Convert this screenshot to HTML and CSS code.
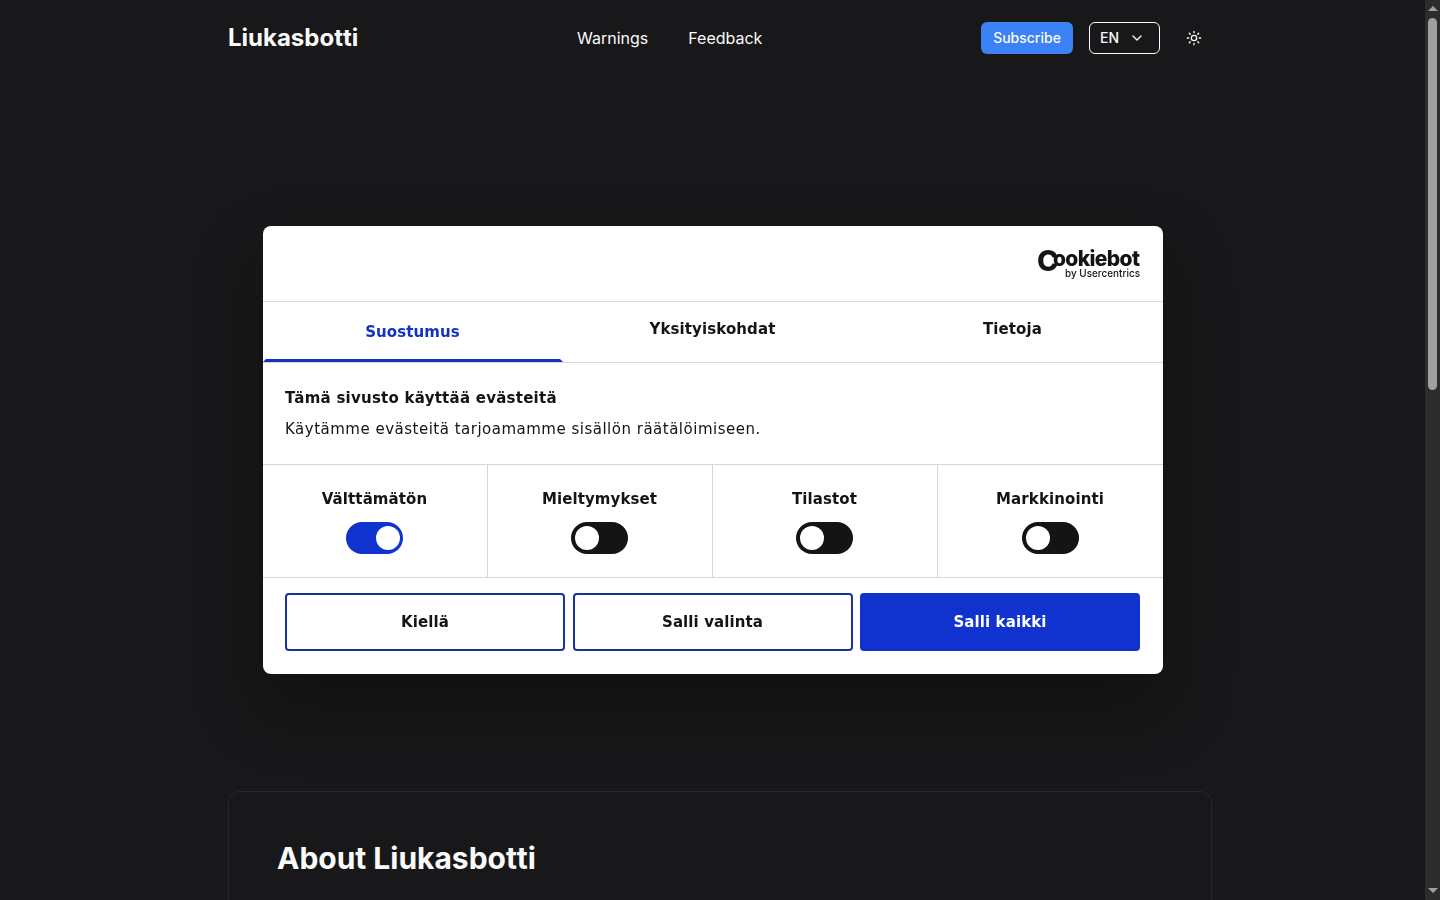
FILE: index.html
```
<!DOCTYPE html>
<html lang="en">
<head>
	<meta charset="UTF-8">
	<meta name="viewport" content="width=device-width, initial-scale=1.0">
	<title>Liukasbotti</title>
	<link rel="stylesheet" href="styles.css">
</head>
<body>
	<div class="page">
		<header class="header">
			<a class="brand" href="#">Liukasbotti</a>
			<nav class="nav">
				<a href="#">Warnings</a>
				<a href="#">Feedback</a>
			</nav>
			<div class="actions">
				<button class="subscribe">Subscribe</button>
				<button class="lang">EN
					<svg width="16" height="16" viewBox="0 0 24 24" fill="none" stroke="currentColor" stroke-width="2" stroke-linecap="round" stroke-linejoin="round"><path d="m6 9 6 6 6-6"/></svg>
				</button>
				<button class="theme" aria-label="Theme">
					<svg width="16" height="16" viewBox="0 0 24 24" fill="none" stroke="currentColor" stroke-width="2" stroke-linecap="round" stroke-linejoin="round"><circle cx="12" cy="12" r="4"/><path d="M12 2v2M12 20v2M4.93 4.93l1.41 1.41M17.66 17.66l1.41 1.41M2 12h2M20 12h2M6.34 17.66l-1.41 1.41M19.07 4.93l-1.41 1.41"/></svg>
				</button>
			</div>
		</header>
		<section class="about">
			<h2>About Liukasbotti</h2>
		</section>
	</div>

	<div class="dialog" role="dialog" lang="fi">
		<div class="dialog-header">
			<svg class="logo" width="104" height="34" viewBox="0 0 104 34">
				<text><tspan class="logo-c" x="0" y="23.6">C</tspan><tspan class="logo-name" x="16" y="18.7" textLength="87" lengthAdjust="spacing">ookiebot</tspan></text>
				<text class="logo-by" x="28" y="29.7" textLength="75" lengthAdjust="spacingAndGlyphs">by Usercentrics</text>
			</svg>
		</div>
		<ul class="tabs">
			<li class="tab active">Suostumus</li>
			<li class="tab">Yksityiskohdat</li>
			<li class="tab">Tietoja</li>
		</ul>
		<div class="dialog-text">
			<h3>Tämä sivusto käyttää evästeitä</h3>
			<p>Käytämme evästeitä tarjoamamme sisällön räätälöimiseen.</p>
		</div>
		<div class="types">
			<div class="type"><span>Välttämätön</span><i class="switch on"></i></div>
			<div class="type"><span>Mieltymykset</span><i class="switch"></i></div>
			<div class="type"><span>Tilastot</span><i class="switch"></i></div>
			<div class="type"><span>Markkinointi</span><i class="switch"></i></div>
		</div>
		<div class="buttons">
			<button>Kiellä</button>
			<button>Salli valinta</button>
			<button class="primary">Salli kaikki</button>
		</div>
	</div>

	<div class="scrollbar">
		<i class="arrow up"></i>
		<i class="thumb"></i>
		<i class="arrow down"></i>
	</div>
</body>
</html>
```
FILE: styles.css
```
*,*::before,*::after{box-sizing:border-box;}
html,body,ul,h2,h3,p{
	margin:0;padding:0;
	list-style:none;
}
body{
	height:100vh;
	overflow:hidden;
	background:#18181a;
	color:#fafafa;
	font-family:Inter,sans-serif;
}
a{color:inherit;text-decoration:none;}
button{font-family:inherit;cursor:pointer;}
.page{
	width:984px;
	margin:0 auto;
}
.header{
	height:76px;
	display:grid;
	grid-template-columns:349px 1fr auto;
	align-items:center;
}
.brand{
	font-size:24px;
	line-height:32px;
	font-weight:700;
	font-kerning:none;
}
.nav{
	display:flex;
	gap:40px;
	font-size:16px;
	line-height:24px;
}
.actions{
	display:flex;
	align-items:center;
	gap:16px;
}
.actions button{
	height:32px;
	border-radius:6px;
	font-size:14px;
	line-height:20px;
	font-weight:500;
	color:#fafafa;
	background:none;
}
.actions .subscribe{
	width:92px;
	padding:0;
	border:0;
	background:#3b82f6;
}
.actions .lang{
	width:71px;
	display:flex;
	align-items:center;
	justify-content:space-between;
	padding:0 14px 0 10px;
	border:1px solid #fafafa;
}
.actions .theme{
	width:36px;
	padding:0;
	border:0;
	display:flex;
	align-items:center;
	justify-content:center;
}
.about{
	margin-top:715px;
	height:109px;
	padding:48px 48px 0;
	border:1px solid #27272a;
	border-bottom:0;
	border-radius:12px 12px 0 0;
}
.about h2{
	font-size:30px;
	line-height:36px;
	font-weight:700;
	letter-spacing:-.02px;
	font-kerning:none;
}

/* cookie dialog */
.dialog{
	position:fixed;
	top:226px;
	left:262.5px;
	width:900px;
	height:448px;
	background:#fff;
	color:#141414;
	border-radius:8px;
	box-shadow:0 32px 68px rgba(0,0,0,.3);
	font-family:"DejaVu Sans",sans-serif;
	font-size:15px;
	letter-spacing:.1px;
	overflow:hidden;
}
.dialog-header{
	height:76px;
	display:flex;
	justify-content:flex-end;
	padding:21px 22px 0;
	border-bottom:1px solid #d6d6d6;
}
.logo{
	fill:#141414;
	letter-spacing:0;
	overflow:visible;
}
.logo-c{font:800 29px Inter,sans-serif;}
.logo-name{font:800 21px Inter,sans-serif;}
.logo-by{font:500 11px Inter,sans-serif;}
.tabs{
	height:61px;
	display:flex;
	border-bottom:1px solid #d6d6d6;
}
.tab{
	flex:1;
	padding-top:16px;
	text-align:center;
	font-weight:700;
	line-height:22px;
}
.tab.active{
	padding-top:19px;
	color:#1432c0;
	position:relative;
}
.tab.active::after{
	content:"";
	position:absolute;
	left:0;
	bottom:0;
	width:100%;
	border:solid transparent;
	border-width:0 3px 3px;
	border-bottom-color:#1432c0;
}
.dialog-text{
	height:101px;
	padding:24px 22.5px 0;
}
.dialog-text h3{
	font-size:15px;
	line-height:22px;
	letter-spacing:.25px;
}
.dialog-text p{
	margin-top:8px;
	line-height:24px;
	letter-spacing:.5px;
}
.types{
	height:114px;
	display:flex;
	border-top:1px solid #d6d6d6;
	border-bottom:1px solid #d6d6d6;
}
.type{
	width:25%;
	display:flex;
	flex-direction:column;
	align-items:center;
	gap:12px;
	padding-top:23px;
	font-weight:700;
	line-height:22px;
	border-right:1px solid #d6d6d6;
}
.type:last-child{border-right:0;}
.switch{
	width:57px;
	height:32px;
	padding:4px;
	border-radius:16px;
	background:#141414;
}
.switch::before{
	content:"";
	display:block;
	width:24px;
	height:24px;
	border-radius:50%;
	background:#fff;
}
.switch.on{background:#1032cf;padding-right:3px;}
.switch.on::before{margin-left:auto;}
.buttons{
	display:flex;
	gap:7.5px;
	padding:15px 22.5px 0;
}
.buttons button{
	flex:1;
	height:58px;
	padding:0;
	border:2px solid #1a32a0;
	border-radius:4px;
	background:#fff;
	color:#141414;
	font-size:15px;
	font-weight:700;
	letter-spacing:.1px;
}
.buttons .primary{
	background:#1032cf;
	border-color:#1032cf;
	color:#fff;
}

.scrollbar{
	position:fixed;
	top:0;
	right:0;
	width:15px;
	height:100vh;
	display:flex;
	flex-direction:column;
	align-items:center;
	padding:6px 0 7px;
	background:#2c2c2c;
}
.thumb{
	width:9px;
	height:372px;
	margin-top:7px;
	border-radius:5px;
	background:#9f9f9f;
}
.arrow{
	border:solid transparent;
	border-width:0 5px 5px;
	border-bottom-color:#9f9f9f;
}
.arrow.down{
	margin-top:auto;
	border-width:5px 5px 0;
	border-top-color:#9f9f9f;
}
```
